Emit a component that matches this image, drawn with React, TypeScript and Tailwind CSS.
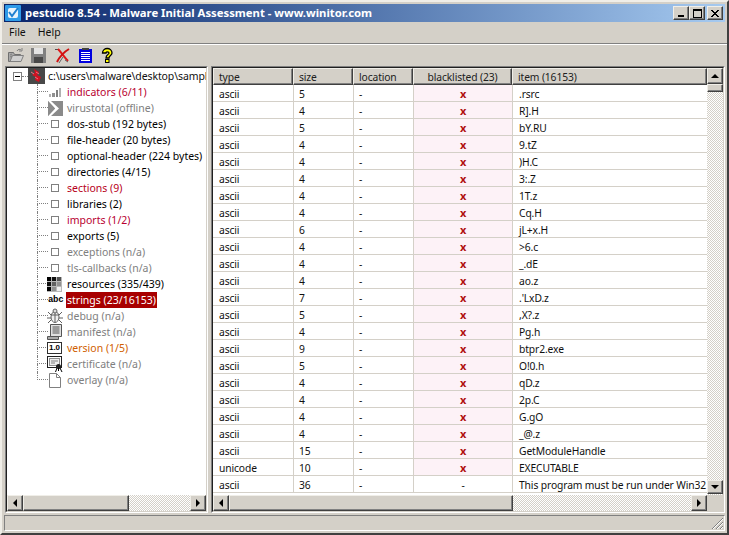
const font = "font-['Noto_Sans','Liberation_Sans',sans-serif]";

const bevel = "bg-[#d4d0c8] border border-t-[#f0eee8] border-l-[#f0eee8] border-r-[#404040] border-b-[#404040] shadow-[inset_-1px_-1px_0_#808080]";
const track = "bg-[repeating-conic-gradient(#d4d0c8_0_25%,#ffffff_0_50%)] bg-[length:2px_2px]";

function Arrow({ dir }: { dir: "up" | "down" | "left" | "right" }) {
  const p = { up: "0,6 8,6 4,2", down: "0,2 8,2 4,6", left: "6,0 6,8 2,4", right: "2,0 2,8 6,4" }[dir];
  return (
    <svg width="8" height="8" viewBox="0 0 8 8"><polygon points={p} fill="#000" /></svg>
  );
}

function SBtn({ dir, className = "" }: { dir: "up" | "down" | "left" | "right"; className?: string }) {
  return <div className={`${bevel} flex items-center justify-center shrink-0 ${className}`}><Arrow dir={dir} /></div>;
}

function WinBtn({ children }: { children: React.ReactNode }) {
  return <div className={`${bevel} w-[16px] h-[14px] flex items-center justify-center`}>{children}</div>;
}

function HScroll({ thumb }: { thumb: number }) {
  return (
    <div className={`h-[16px] flex flex-1 min-w-0 ${track}`}>
      <SBtn dir="left" className="w-[16px]" />
      <div className={`${bevel} h-[16px] shrink-0`} style={{ width: thumb }} />
      <div className="flex-1" />
      <SBtn dir="right" className="w-[16px]" />
    </div>
  );
}

const IconBars = () => (
  <svg width="15" height="15" viewBox="0 0 15 15" shapeRendering="crispEdges">
    <rect x="1" y="9" width="2" height="3" fill="#b0b0b0" />
    <rect x="4" y="8" width="3" height="4" fill="#909090" />
    <rect x="8" y="5" width="2" height="7" fill="#808080" />
    <rect x="11" y="3" width="2" height="9" fill="#b0b0b0" />
  </svg>
);
const IconVT = () => (
  <svg width="15" height="15" viewBox="0 0 15 15" shapeRendering="geometricPrecision">
    <rect width="15" height="15" fill="#8a8a8a" />
    <polygon points="0,0 3,0 11,7.500 3,15 0,15 7,7.500" fill="#fff" />
    <polygon points="0,0 0,15 7,7.500" fill="#8a8a8a" />
  </svg>
);
const IconBox = () => (
  <svg width="15" height="15" viewBox="0 0 15 15">
    <rect x="3.500" y="3.500" width="7" height="7" fill="#fff" stroke="#808080" />
  </svg>
);
const IconRes = () => (
  <svg width="15" height="15" viewBox="0 0 15 15" shapeRendering="crispEdges" className="-ml-[1px]">
    <rect width="15" height="15" fill="#b8b8b8" />
    {[
      ["#000", "#101010", "#505050"],
      ["#101010", "#606060", "#909090"],
      ["#000", "#909090", "#f0f0f0"],
    ].map((r, y) =>
      r.map((c, x) => <rect key={`${x}${y}`} x={x * 5} y={y * 5} width="4" height="4" fill={c} />)
    )}
  </svg>
);
const IconAbc = () => (
  <div className="w-[15px] text-[9px] leading-[14px] tracking-[-0.3px] text-black font-['Liberation_Mono',monospace] font-bold">abc</div>
);
const IconBug = () => (
  <svg width="16" height="16" viewBox="0 0 16 16" fill="none" stroke="#606060" className="-ml-[1px]">
    <ellipse cx="8" cy="9" rx="4" ry="5.500" fill="#f0f0f0" />
    <circle cx="8" cy="3" r="2" fill="#ddd" />
    <path d="M4 7h8M8 5v9M1 4l3 3M15 4l-3 3M0 10h4M16 10h-4M1 15l3-3M15 15l-3-3" />
  </svg>
);
const IconManifest = () => (
  <svg width="16" height="16" viewBox="0 0 16 16" stroke="#555" className="-ml-[1px]">
    <path d="M3.500 .5h11v12h-11z" fill="#e0e0e0" />
    <path d="M.5 12.500h11v3h-11z" fill="#aaa" />
    <path d="M5.500 3h7M5.500 5h7M5.500 7h7M5.500 9h7" fill="none" />
  </svg>
);
const IconVersion = () => (
  <div className="-ml-[1px] w-[15px] h-[12px] border border-[#303030] text-[8px] leading-[10px] text-center font-bold text-black font-['Liberation_Sans',sans-serif]">1.0</div>
);
const IconCert = () => (
  <svg width="16" height="16" viewBox="0 0 16 16" className="-ml-[1px]">
    <rect x=".5" y=".5" width="14" height="11" fill="#fff" stroke="#202020" />
    <rect x="2.500" y="2.500" width="10" height="7" fill="#eee" stroke="#909090" />
    <path d="M4 5h7M4 7h4" stroke="#808080" fill="none" />
    <circle cx="11.500" cy="10.500" r="2.500" fill="#202020" />
    <path d="M10 12l-1.500 4M13 12l2 4M11.500 12v3" stroke="#000" fill="none" />
  </svg>
);
const IconOverlay = () => (
  <svg width="15" height="15" viewBox="0 0 15 15" fill="none" stroke="#808080">
    <path d="M1.500 .5h7l4 4v10h-11z" fill="#fff" />
    <path d="M8.500 .5v4h4" />
  </svg>
);

const tree: { label: string; cls: string; icon: React.ReactNode; sel?: boolean }[] = [
  { label: "indicators (6/11)", cls: "text-[#b80030]", icon: <IconBars /> },
  { label: "virustotal (offline)", cls: "text-[#808080]", icon: <IconVT /> },
  { label: "dos-stub (192 bytes)", cls: "text-black", icon: <IconBox /> },
  { label: "file-header (20 bytes)", cls: "text-black", icon: <IconBox /> },
  { label: "optional-header (224 bytes)", cls: "text-black", icon: <IconBox /> },
  { label: "directories (4/15)", cls: "text-black", icon: <IconBox /> },
  { label: "sections (9)", cls: "text-[#b80020]", icon: <IconBox /> },
  { label: "libraries (2)", cls: "text-black", icon: <IconBox /> },
  { label: "imports (1/2)", cls: "text-[#b80030]", icon: <IconBox /> },
  { label: "exports (5)", cls: "text-black", icon: <IconBox /> },
  { label: "exceptions (n/a)", cls: "text-[#808080]", icon: <IconBox /> },
  { label: "tls-callbacks (n/a)", cls: "text-[#808080]", icon: <IconBox /> },
  { label: "resources (335/439)", cls: "text-black", icon: <IconRes /> },
  { label: "strings (23/16153)", cls: "text-white", icon: <IconAbc />, sel: true },
  { label: "debug (n/a)", cls: "text-[#808080]", icon: <IconBug /> },
  { label: "manifest (n/a)", cls: "text-[#808080]", icon: <IconManifest /> },
  { label: "version (1/5)", cls: "text-[#d06000]", icon: <IconVersion /> },
  { label: "certificate (n/a)", cls: "text-[#808080]", icon: <IconCert /> },
  { label: "overlay (n/a)", cls: "text-[#808080]", icon: <IconOverlay /> },
];

const rows: [string, number, string][] = [
  ["ascii", 5, ".rsrc"], ["ascii", 4, "R].H"], ["ascii", 5, "bY.RU"], ["ascii", 4, "9.tZ"],
  ["ascii", 4, ")H.C"], ["ascii", 4, "3:.Z"], ["ascii", 4, "1T.z"], ["ascii", 4, "Cq.H"],
  ["ascii", 6, "jL+x.H"], ["ascii", 4, ">6.c"], ["ascii", 4, "_.dE"], ["ascii", 4, "ao.z"],
  ["ascii", 7, ".'LxD.z"], ["ascii", 5, ",X?.z"], ["ascii", 4, "Pg.h"], ["ascii", 9, "btpr2.exe"],
  ["ascii", 5, "O!0.h"], ["ascii", 4, "qD.z"], ["ascii", 4, "2p.C"], ["ascii", 4, "G.gO"],
  ["ascii", 4, "_@.z"], ["ascii", 15, "GetModuleHandle"], ["unicode", 10, "EXECUTABLE"],
  ["ascii", 36, "This program must be run under Win32"],
];

const cols = "grid grid-cols-[80px_60px_60px_99px_195px]";
const Head = ({ children, center }: { children: React.ReactNode; center?: boolean }) => (
  <div className={`${bevel} h-[17px] leading-[16px] text-[#202020] overflow-hidden whitespace-nowrap ${center ? "text-center" : "pl-[5px]"}`}>{children}</div>
);
const cell = "h-[17px] leading-[18px] border-b border-[#d4d0c8] whitespace-nowrap overflow-hidden";

export default function App() {
  return (
    <div className={`${font} w-[729px] h-[535px] bg-[#d4d0c8] text-[10.5px] text-black border-2 border-t-[#f0eee8] border-l-[#f0eee8] border-r-[#404040] border-b-[#404040] flex flex-col overflow-hidden p-[2px]`}>
      <div className="h-[18px] shrink-0 flex items-center bg-gradient-to-r from-[#0a246a] to-[#a6caf0] pl-[1px] pr-[1px]">
        <svg width="16" height="16" viewBox="0 0 16 16" className="shrink-0">
          <rect width="16" height="16" rx="1" fill="#2f9be8" />
          <rect x="3" y="3" width="10" height="10" rx="2" fill="#e8f4fc" />
          <path d="M4 7l3 4 6-8" stroke="#2080d0" strokeWidth="2" fill="none" />
        </svg>
        <div className="ml-[4px] flex-1 text-white font-bold whitespace-nowrap text-[11.3px]">
          pestudio 8.54 - Malware Initial Assessment - www.winitor.com
        </div>
        <div className="flex items-center mr-[1px]">
          <WinBtn><span className="block w-[6px] h-[2px] bg-black mt-[6px] mr-[1px]" /></WinBtn>
          <WinBtn><span className="block w-[9px] h-[9px] border border-black border-t-2" /></WinBtn>
          <div className="w-[2px]" />
          <WinBtn>
            <svg width="8" height="7" viewBox="0 0 8 7"><path d="M0 0l7 7M7 0l-7 7M1 0l7 7M8 0l-7 7" stroke="#000" fill="none" /></svg>
          </WinBtn>
        </div>
      </div>

      <div className="h-[20px] shrink-0 flex items-center text-[#101010] pl-[5px] gap-[12px] mt-[1px]">
        <span>File</span>
        <span>Help</span>
      </div>
      <div className="h-[2px] shrink-0 -mx-[2px] border-t border-[#808080] border-b border-b-white" />

      <div className="h-[21px] shrink-0 flex items-center gap-[7px] pl-[4px] pb-[2px]">
        <svg width="16" height="16" viewBox="0 0 16 16">
          <path d="M.5 5.500h5l1 2h6v7H.5z" fill="#a8a8a8" stroke="#707070" />
          <path d="M2 14.500l2.500-6h11l-2.500 6z" fill="#d0d0d0" stroke="#808080" />
          <path d="M2 8l2-1M2 10l2-1M9 4c1-2 3-2 4-1M14 1v3h-3" stroke="#808080" fill="none" />
        </svg>
        <svg width="16" height="16" viewBox="0 0 16 16" shapeRendering="crispEdges">
          <rect x="0" y="1" width="15" height="15" fill="#808080" />
          <rect x="3" y="1" width="9" height="6" fill="#e4e4e4" />
          <rect x="3" y="10" width="9" height="6" fill="#484848" />
        </svg>
        <svg width="16" height="16" viewBox="0 0 16 16">
          <path d="M1 2.500h4" stroke="#505050" fill="none" />
          <path d="M4 2c3 3 6 8 10 12" stroke="#e01818" strokeWidth="2" fill="none" />
          <path d="M15 2C10 5 6 9 3 15" stroke="#d01010" strokeWidth="2" fill="none" />
          <path d="M9 10l-4 6M11 13l3 2" stroke="#606060" fill="none" />
        </svg>
        <svg width="16" height="16" viewBox="0 0 16 16" shapeRendering="crispEdges">
          <rect x="2" y="2" width="13" height="14" fill="#0000e0" />
          <rect x="5" y="1" width="7" height="2" fill="#404040" />
          <path d="M4 5.500h9M4 7.500h9M4 9.500h9M4 11.500h9M4 13.500h9" stroke="#fff" fill="none" />
        </svg>
        <svg width="14" height="16" viewBox="0 0 14 16">
          <path d="M2.500 6C2.500 0 12 0 12 6c0 2.500-3 2.500-3 5H6c0-4 3-3 3-5 0-1.500-3-1.500-3 0z" fill="#ffff00" stroke="#000" strokeWidth="1.300" />
          <rect x="5.500" y="12.500" width="3.500" height="3" fill="#ffff00" stroke="#000" />
        </svg>
      </div>

      <div className="flex-1 flex min-h-0 ml-[1px] mb-[2px] gap-[3px]">
        <div className="w-[203px] shrink-0 border border-t-[#808080] border-l-[#808080] border-r-white border-b-white flex">
          <div className="flex-1 min-w-0 border border-t-[#202020] border-l-[#202020] border-r-[#d4d0c8] border-b-[#d4d0c8] bg-white flex flex-col">
            <div className="flex-1 min-h-0 overflow-hidden">
              <div className="h-[16px] flex items-center whitespace-nowrap text-[#101010]">
                <div className="ml-[6px] w-[9px] h-[9px] border border-[#808080] flex items-center justify-center shrink-0">
                  <span className="block w-[5px] h-px bg-black" />
                </div>
                <div className="w-[6px] border-t border-dotted border-[#808080] shrink-0" />
                <svg width="17" height="16" viewBox="0 0 17 16" className="shrink-0">
                  <rect width="17" height="16" fill="#484848" />
                  <path d="M6 1l5 3-2 3 4 2-2 5-4-2 1-3-4-2 3-2z" fill="#d01020" />
                  <path d="M3 4l3 2M8 4l3 2M7 9l3 2" stroke="#f07080" fill="none" />
                </svg>
                <span className="ml-[3px] mt-[2px] tracking-[-0.1px]">c:\users\malware\desktop\sample</span>
              </div>
              {tree.map((t, i) => (
                <div key={t.label} className="h-[16px] flex items-stretch whitespace-nowrap">
                  <div className="ml-[30px] w-[11px] shrink-0 flex flex-col">
                    <div className="h-[8px] border-l border-b border-dotted border-[#808080]" />
                    {i < tree.length - 1 && <div className="h-[8px] border-l border-dotted border-[#808080]" />}
                  </div>
                  <div className="w-[18px] shrink-0 flex items-center">{t.icon}</div>
                  <div className={`h-[16px] leading-[17px] px-[1px] ${t.cls} ${t.sel ? "bg-[#a80000]" : ""}`}>{t.label}</div>
                </div>
              ))}
            </div>
            <div className="flex"><HScroll thumb={106} /></div>
          </div>
        </div>

        <div className="flex-1 min-w-0 border border-t-[#808080] border-l-[#808080] border-r-white border-b-white flex">
          <div className="flex-1 min-w-0 border border-t-[#202020] border-l-[#202020] border-r-[#d4d0c8] border-b-[#d4d0c8] flex flex-col bg-white">
            <div className="flex-1 min-h-0 flex">
              <div className="flex-1 min-w-0 overflow-hidden text-[#101010] text-[10.3px] tracking-[-0.12px]">
                <div className={cols}>
                  <Head>type</Head>
                  <Head>size</Head>
                  <Head>location</Head>
                  <Head center>blacklisted (23)</Head>
                  <Head>item (16153)</Head>
                </div>
                {rows.map((r, i) => (
                  <div key={i} className={cols}>
                    <div className={`${cell} pl-[6px]`}>{r[0]}</div>
                    <div className={`${cell} pl-[5px] border-l border-l-[#d4d0c8]`}>{r[1]}</div>
                    <div className={`${cell} pl-[5px] border-l border-l-[#d4d0c8]`}>-</div>
                    <div className={`${cell} text-center border-l border-l-[#d4d0c8] ${i < 23 ? "bg-[#fdf2f7] text-[#b01010] font-bold text-[11px]" : ""}`}>{i < 23 ? "x" : "-"}</div>
                    <div className={`${cell} pl-[6px] border-l border-l-[#d4d0c8]`}>{r[2]}</div>
                  </div>
                ))}
              </div>
              <div className={`w-[16px] shrink-0 flex flex-col ${track}`}>
                <SBtn dir="up" className="h-[16px]" />
                <div className={`${bevel} h-[8px] shrink-0`} />
                <div className="flex-1" />
                <SBtn dir="down" className="h-[14px] mb-[1px]" />
              </div>
            </div>
            <div className="flex shrink-0">
              <HScroll thumb={284} />
              <div className="w-[16px] h-[16px] bg-[#d4d0c8] shrink-0" />
            </div>
          </div>
        </div>
      </div>

      <div className="h-[16px] shrink-0 border border-t-[#808080] border-l-[#808080] border-r-white border-b-white flex items-end justify-end overflow-hidden">
        <svg width="14" height="14" viewBox="0 0 14 14">
          <path d="M13 2L2 13M13 6L6 13M13 10L10 13" stroke="#808080" fill="none" />
          <path d="M13 3L3 13M13 7L7 13M13 11L11 13" stroke="#fff" fill="none" />
        </svg>
      </div>
    </div>
  );
}
